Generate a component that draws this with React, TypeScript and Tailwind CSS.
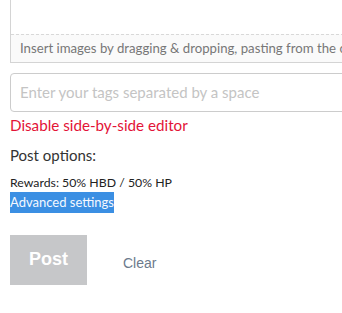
export default function App() {
  return (
    <div className="w-[342px] h-[313px] overflow-hidden bg-white font-['Lato',sans-serif]">
      <div className="w-[380px] pl-[10px]">
        {/* Editor bottom (image drop hint) */}
        <div className="border-x border-b border-[#d4d4d4]">
          <div className="h-[34px] bg-white" />
          <div className="h-[28px] border-t border-dashed border-[#d8d8d8] bg-[#fafafa] pl-[9px] pt-[5px] whitespace-nowrap text-[13.2px] leading-[16px] text-[#777]">
            Insert images by dragging &amp; dropping, pasting from the clipboard, or by selecting them.
          </div>
        </div>

        {/* Tags */}
        <div className="mt-[10px] h-[39px] rounded-[4px] border border-[#ccc] flex items-center pl-[9px] whitespace-nowrap text-[15px] text-[#c4c4c4]">
          Enter your tags separated by a space
        </div>

        <div className="mt-[2px] text-[15.2px] leading-[22px] text-[#e31337]">Disable side-by-side editor</div>

        <div className="mt-[9px] text-[15px] leading-[20px] text-[#333]">Post options:</div>

        <div className="mt-[10px] text-[12.3px] leading-[16px] text-[#222]">Rewards: 50% HBD / 50% HP</div>
        <div className="mt-[1px] flex">
          <span className="bg-[#3b8fe3] text-[#f4f8ff] text-[13px] leading-[21px]">Advanced settings</span>
        </div>

        <div className="mt-[22px] flex items-center">
          <div className="w-[77px] h-[50px] bg-[#c6c7c9] flex items-center justify-center pb-[1px] text-white text-[18px] font-bold font-['Liberation_Sans',sans-serif]">
            Post
          </div>
          <div className="ml-[36px] mt-[6px] text-[14px] text-[#6c7a8c] font-['Liberation_Sans',sans-serif]">Clear</div>
        </div>
      </div>
    </div>
  );
}
